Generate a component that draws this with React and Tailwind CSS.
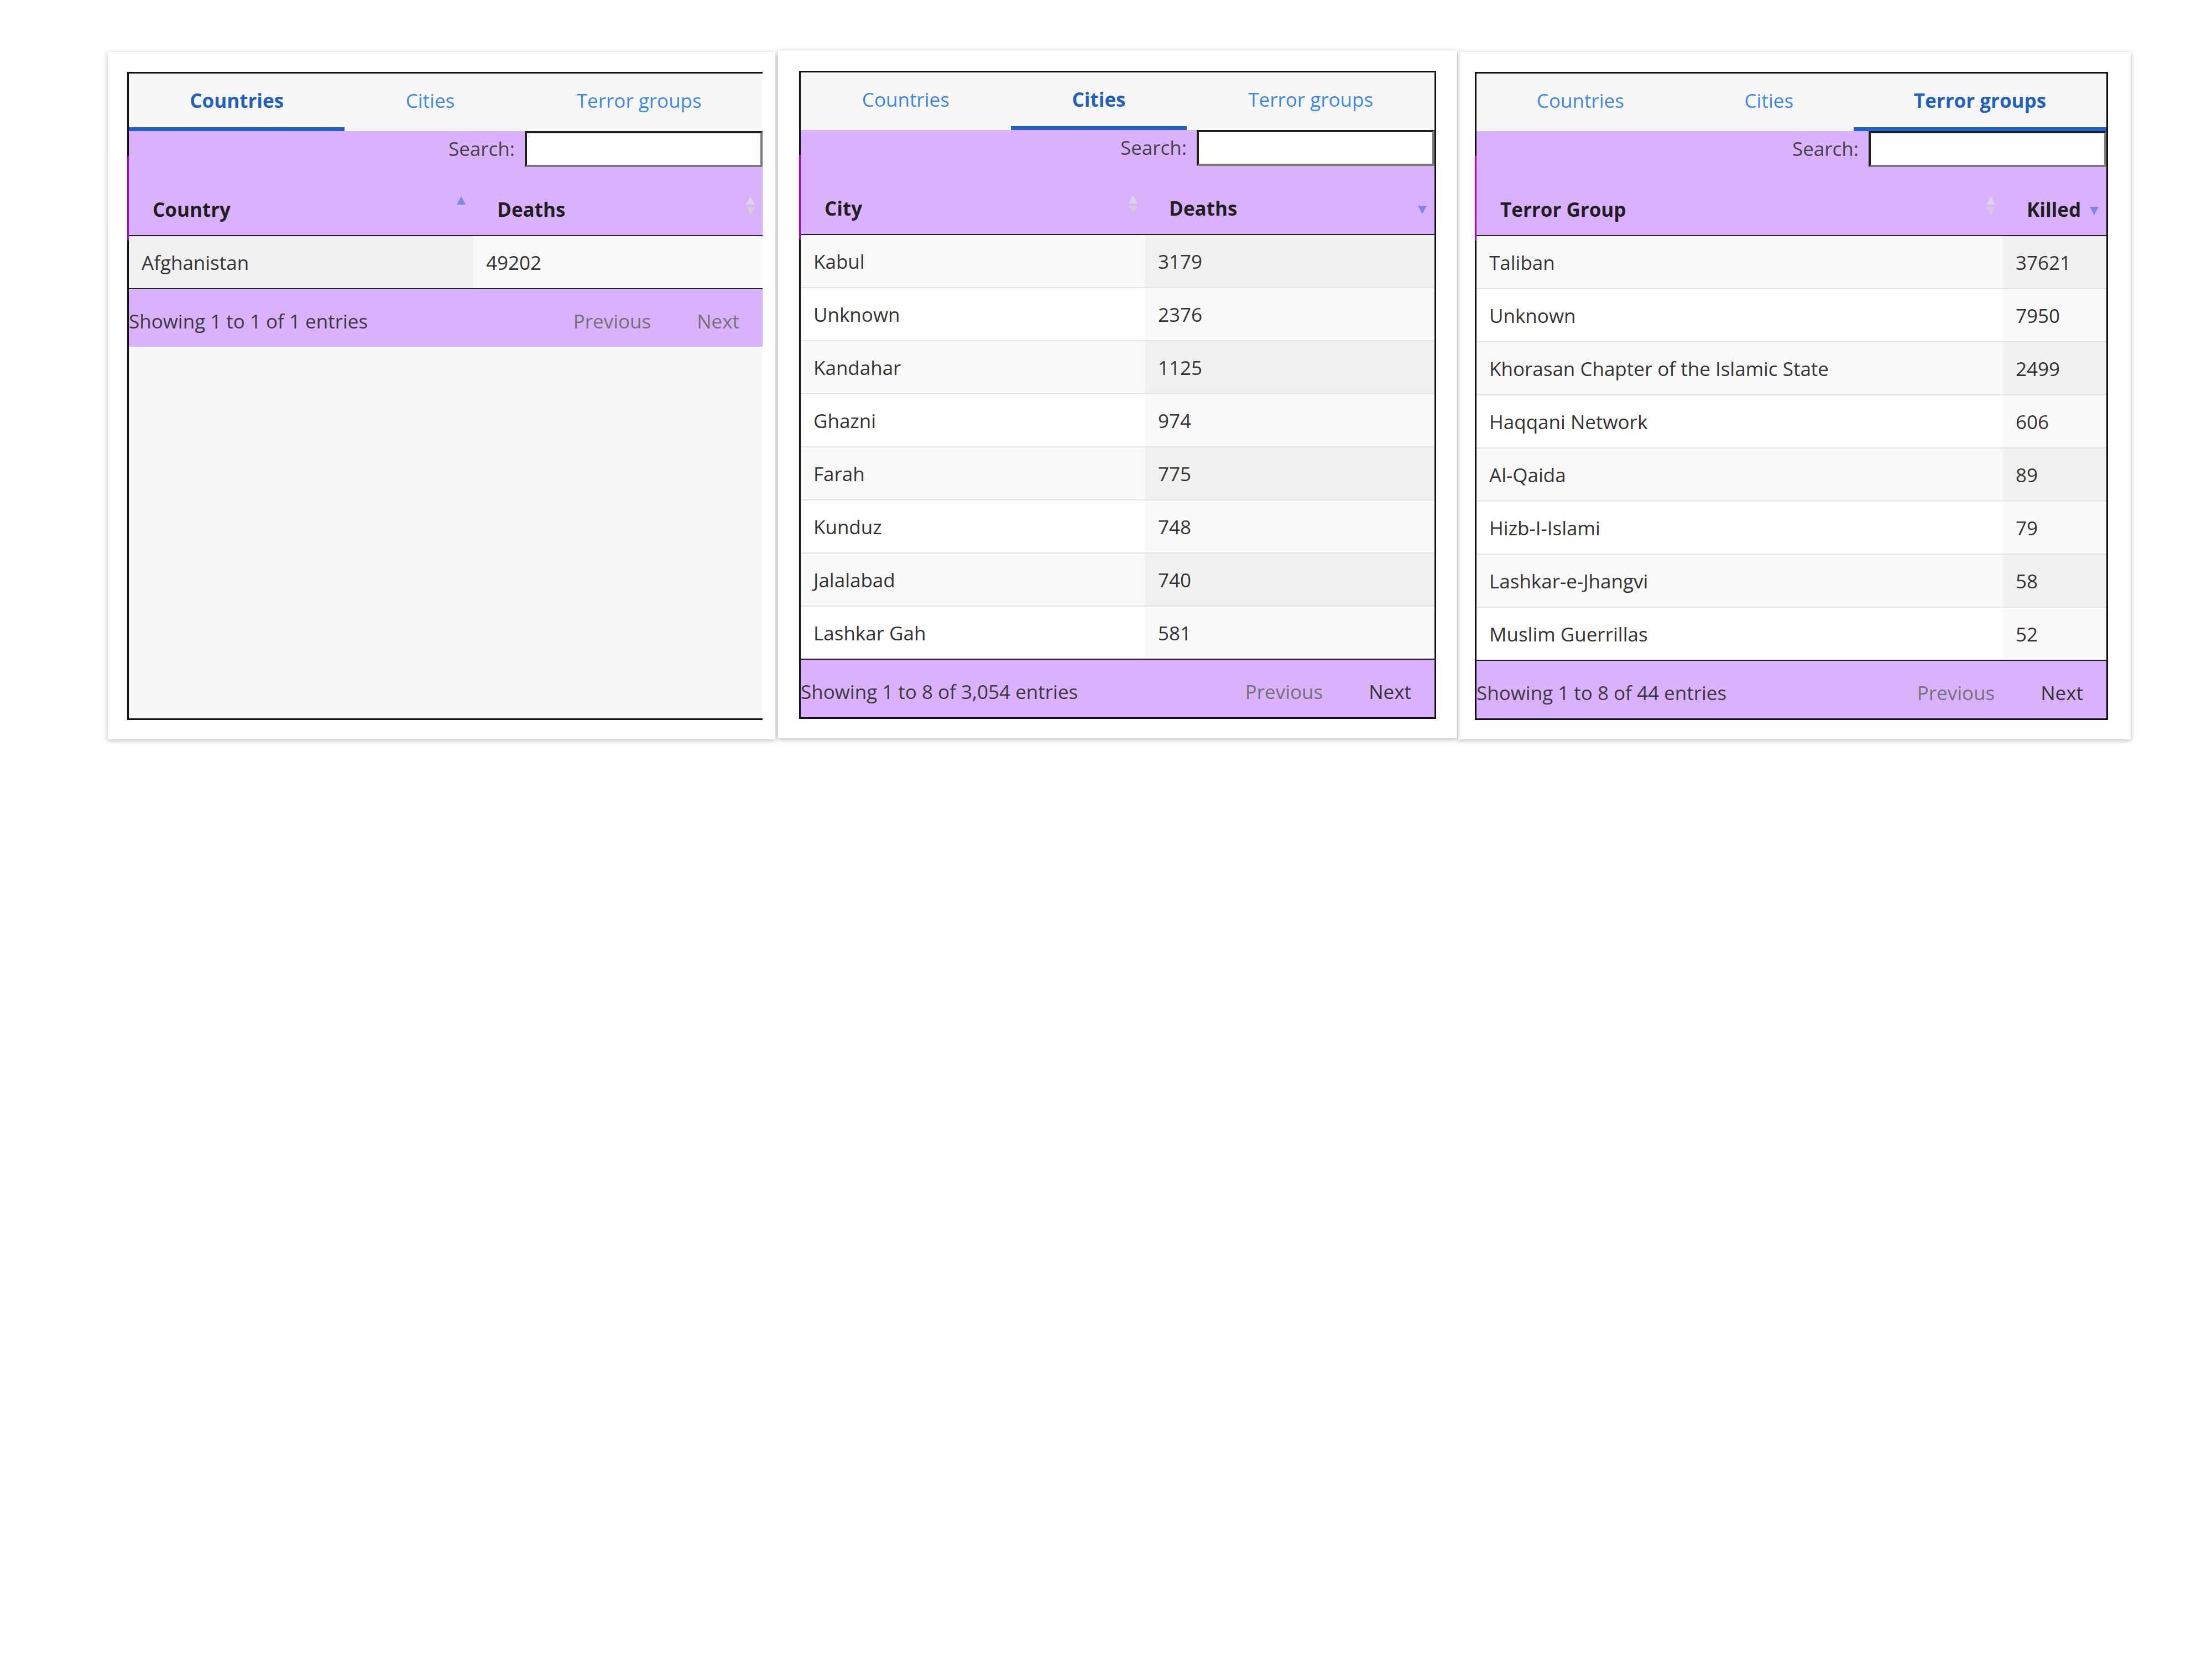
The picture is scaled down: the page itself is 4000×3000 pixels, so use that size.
import React from 'react';

const cities = [
    ['Kabul', '3179'],
    ['Unknown', '2376'],
    ['Kandahar', '1125'],
    ['Ghazni', '974'],
    ['Farah', '775'],
    ['Kunduz', '748'],
    ['Jalalabad', '740'],
    ['Lashkar Gah', '581'],
];

const groups = [
    ['Taliban', '37621'],
    ['Unknown', '7950'],
    ['Khorasan Chapter of the Islamic State', '2499'],
    ['Haqqani Network', '606'],
    ['Al-Qaida', '89'],
    ['Hizb-I-Islami', '79'],
    ['Lashkar-e-Jhangvi', '58'],
    ['Muslim Guerrillas', '52'],
];

const SortIcon = ({ dir }) => {
    const up = dir === 'asc' ? '#7d88e2' : '#dcd5e6';
    const down = dir === 'desc' ? '#7d88e2' : '#d2cbdc';
    return (
        <svg
            width="16"
            height="34"
            viewBox="0 0 16 34"
            className="absolute right-[14px] top-1/2 -translate-y-1/2"
        >
            {dir !== 'desc' && <polygon points="8,0 16,15 0,15" fill={up} />}
            {dir !== 'asc' && <polygon points="0,19 16,19 8,34" fill={down} />}
        </svg>
    );
};

const Tabs = ({ active }) => {
    const tabs = ['Countries', 'Cities', 'Terror groups'];
    return (
        <div className="flex h-[104px] bg-[#f8f8f8]">
            {tabs.map((t, i) => (
                <div
                    key={t}
                    className={`flex-auto flex items-center justify-center pt-[2px] border-b-[7px] ${
                        i === active
                            ? 'border-[#1f62cc] text-[#1f60c4] font-bold'
                            : 'border-transparent text-[#3a87ee]'
                    }`}
                >
                    {t}
                </div>
            ))}
        </div>
    );
};

const Panel = ({ active, headers, sortDirs, sortedCol, rows, grid, info, nextOn, tableClass }) => {
    const cellBg = (ri, ci) => {
        const odd = ri % 2 === 0;
        if (ci === sortedCol) return odd ? 'bg-[#f1f1f1]' : 'bg-[#fafafa]';
        return odd ? 'bg-[#f9f9f9]' : 'bg-white';
    };

    return (
        <div className={`h-[1172px] bg-[#f8f8f8] border-[#111] flex flex-col ${tableClass}`}>
            <Tabs active={active} />

            <div className="relative bg-[#dab1fc]">
                <span className="absolute left-[-3px] top-[45px] bottom-[-8px] w-[3px] bg-[#aa00dc]" />
                <div className="h-[82px] flex justify-end items-start">
                    <div className="h-[65px] flex items-center mr-[18px] text-[#444]">Search:</div>
                    <div className="w-[430px] h-[65px] bg-white border-[4px] border-t-[#1e1e1e] border-l-[#1e1e1e] border-r-[#7a7a7a] border-b-[#7a7a7a]" />
                </div>
                <div className={`grid ${grid} h-[108px] border-b-2 border-[#222]`}>
                    {headers.map((h, i) => (
                        <div key={h} className="relative flex items-center pt-[14px] pl-[43px] font-bold text-[#1f1f1f]">
                            {h}
                            <SortIcon dir={sortDirs[i]} />
                        </div>
                    ))}
                </div>
            </div>

            <div>
                {rows.map((r, ri) => (
                    <div
                        key={ri}
                        className={`grid ${grid} h-[96px] border-b-2 ${
                            ri === rows.length - 1 ? 'border-[#222]' : 'border-[#e5e5e5]'
                        }`}
                    >
                        {r.map((c, ci) => (
                            <div key={ci} className={`flex items-center pt-[3px] pl-[23px] text-[#333] ${cellBg(ri, ci)}`}>
                                {c}
                            </div>
                        ))}
                    </div>
                ))}
            </div>

            <div className="h-[104px] bg-[#dab1fc] flex items-center pt-[12px] text-[#3a3a3a]">
                <div className="flex-1">{info}</div>
                <div className="flex items-center gap-[3px] pr-[2px]">
                    <span className="px-[40px] text-[#737373]">Previous</span>
                    <span className={`px-[40px] ${nextOn ? 'text-[#333]' : 'text-[#737373]'}`}>Next</span>
                </div>
            </div>
        </div>
    );
};

const App = () => {
    return (
        <div className="w-[4000px] h-[3000px] bg-white font-['Open_Sans',sans-serif] text-[35px] leading-normal">
            <div className="flex items-start pt-[94px] pl-[195px]">
                <div className="w-[1207px] h-[1243px] pt-[36px] pl-[35px] bg-white shadow-[0_2px_9px_rgba(0,0,0,0.28)]">
                    <Panel
                        active={0}
                        headers={['Country', 'Deaths']}
                        sortDirs={['asc', 'both']}
                        sortedCol={0}
                        rows={[['Afghanistan', '49202']]}
                        grid="grid-cols-[623px_1fr]"
                        info="Showing 1 to 1 of 1 entries"
                        nextOn={false}
                        tableClass="w-[1149px] border-t-[3px] border-l-[3px] border-b-[3px]"
                    />
                </div>

                <div className="relative z-10 -mt-[3px] ml-[5px] w-[1228px] h-[1244px] pt-[37px] pl-[38px] bg-white shadow-[0_2px_9px_rgba(0,0,0,0.28)]">
                    <Panel
                        active={1}
                        headers={['City', 'Deaths']}
                        sortDirs={['both', 'desc']}
                        sortedCol={1}
                        rows={cities}
                        grid="grid-cols-[623px_1fr]"
                        info="Showing 1 to 8 of 3,054 entries"
                        nextOn
                        tableClass="w-[1152px] border-[3px]"
                    />
                </div>

                <div className="ml-[2px] w-[1216px] h-[1243px] pt-[36px] pl-[30px] bg-white shadow-[0_2px_9px_rgba(0,0,0,0.28)]">
                    <Panel
                        active={2}
                        headers={['Terror Group', 'Killed']}
                        sortDirs={['both', 'desc']}
                        sortedCol={1}
                        rows={groups}
                        grid="grid-cols-[952px_1fr]"
                        info="Showing 1 to 8 of 44 entries"
                        nextOn
                        tableClass="w-[1145px] border-[3px]"
                    />
                </div>
            </div>
        </div>
    );
};

export default App;
